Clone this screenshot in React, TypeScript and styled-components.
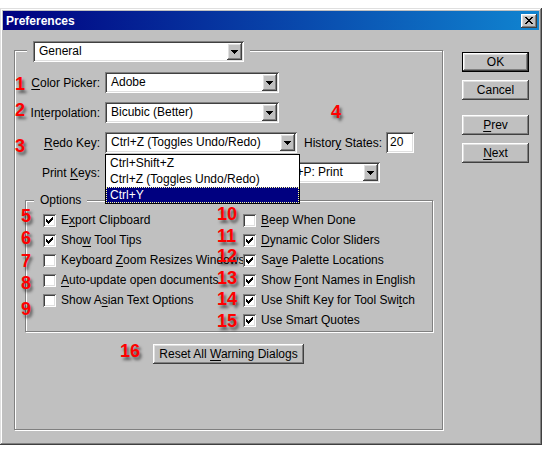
import * as React from 'react'
import styled, { createGlobalStyle, css } from 'styled-components'

const GlobalStyle = createGlobalStyle`
  html, body {
    margin: 0;
    padding: 0;
    background: #fff;
  }
  body {
    font-family: 'Liberation Sans', Arial, sans-serif;
    font-size: 12px;
    color: #000;
  }
  u {
    text-decoration-thickness: 1px;
    text-underline-offset: 2px;
  }
`

const raised = css`
  box-shadow: inset -1px -1px #404040, inset 1px 1px #fff,
    inset -2px -2px #808080, inset 2px 2px #dfdfdf;
`

const sunken = css`
  box-shadow: inset 1px 1px #808080, inset -1px -1px #fff,
    inset 2px 2px #404040, inset -2px -2px #dfdfdf;
`

const etched = css`
  border: 1px solid #808080;
  box-shadow: inset 1px 1px #fff, 1px 1px #fff;
`

// annotation numbers over the screenshot, page coordinates (x, cap top)
const MARKS: Array<[string, number, number]> = [
  ['1', 16, 78], ['2', 16, 104], ['3', 16, 140], ['4', 332, 106],
  ['5', 22, 210], ['6', 22, 232], ['7', 22, 255], ['8', 22, 277], ['9', 22, 303],
  ['10', 218, 208], ['11', 218, 230], ['12', 218, 250], ['13', 218, 272],
  ['14', 218, 293], ['15', 218, 315], ['16', 121, 345],
]

const LEFT_OPTIONS: Array<[React.ReactNode, boolean]> = [
  [<>E<u>x</u>port Clipboard</>, true],
  [<>Sho<u>w</u> Tool Tips</>, true],
  [<>Keyboard <u>Z</u>oom Resizes Windows</>, false],
  [<><u>A</u>uto-update open documents</>, false],
  [<>Show A<u>s</u>ian Text Options</>, false],
]

const RIGHT_OPTIONS: Array<[React.ReactNode, boolean]> = [
  [<><u>B</u>eep When Done</>, false],
  [<><u>D</u>ynamic Color Sliders</>, true],
  [<>Sa<u>v</u>e Palette Locations</>, true],
  [<>Show <u>F</u>ont Names in English</>, true],
  [<>Use Shift Key for Tool Swi<u>t</u>ch</>, true],
  [<>Use Smart Quotes</>, true],
]

const Arrow = () => (
  <svg width='7' height='4' viewBox='0 0 7 4' shapeRendering='crispEdges'>
    <path d='M0 0h7v1h-7zM1 1h5v1h-5zM2 2h3v1h-3zM3 3h1v1h-1z' fill='#000' />
  </svg>
)

const CheckMark = () => (
  <svg width='7' height='7' viewBox='0 0 7 7' shapeRendering='crispEdges'>
    <path
      d='M0 2h1v3h-1zM1 3h1v3h-1zM2 4h1v3h-1zM3 3h1v3h-1zM4 2h1v3h-1zM5 1h1v3h-1zM6 0h1v3h-1z'
      fill='#000'
    />
  </svg>
)

const CloseGlyph = () => (
  <svg width='8' height='7' viewBox='0 0 8 7' shapeRendering='crispEdges'>
    <path
      d='M0 0h2v1h-2zM6 0h2v1h-2zM1 1h2v1h-2zM5 1h2v1h-2zM2 2h4v1h-4zM3 3h2v1h-2zM2 4h4v1h-4zM1 5h2v1h-2zM5 5h2v1h-2zM0 6h2v1h-2zM6 6h2v1h-2z'
      fill='#000'
    />
  </svg>
)

const Combo = ({ width, value, children }: {
  width: number, value: string, children?: React.ReactNode
}) => (
  <ComboBox $width={width}>
    <ComboText>{ value }</ComboText>
    <DropButton><Arrow /></DropButton>
    { children }
  </ComboBox>
)

const Check = ({ checked, label }: { checked: boolean, label: React.ReactNode }) => (
  <CheckRow>
    <CheckBox>{ checked && <CheckMark /> }</CheckBox>
    <span>{ label }</span>
  </CheckRow>
)

export default function App() {
  return (
    <Page>
      <GlobalStyle />
      <Window>
        <TitleBar>
          <Title>Preferences</Title>
          <CloseButton><CloseGlyph /></CloseButton>
        </TitleBar>
        <Body>
          <Panel>
            <PanelHeader>
              <Combo width={211} value='General' />
            </PanelHeader>
            <Fields>
              <FieldRow>
                <FieldLabel><u>C</u>olor Picker:</FieldLabel>
                <Combo width={174} value='Adobe' />
              </FieldRow>
              <FieldRow>
                <FieldLabel>In<u>t</u>erpolation:</FieldLabel>
                <Combo width={174} value='Bicubic (Better)' />
              </FieldRow>
              <FieldRow>
                <FieldLabel><u>R</u>edo Key:</FieldLabel>
                <Combo width={192} value='Ctrl+Z (Toggles Undo/Redo)'>
                  <DropList>
                    <ListItem>Ctrl+Shift+Z</ListItem>
                    <ListItem>Ctrl+Z (Toggles Undo/Redo)</ListItem>
                    <ListItem $selected>Ctrl+Y</ListItem>
                  </DropList>
                </Combo>
                <SideLabel>Histor<u>y</u> States:</SideLabel>
                <TextInput>20</TextInput>
              </FieldRow>
              <FieldRow>
                <FieldLabel>Print <u>K</u>eys:</FieldLabel>
                <Combo width={275} value='Ctrl+P: Print with Preview / Ctrl+Alt+P: Print' />
              </FieldRow>
            </Fields>
            <OptionsGroup>
              <GroupLegend>Options</GroupLegend>
              <OptionColumns>
                <OptionColumn>
                  {LEFT_OPTIONS.map(([label, checked], i) => (
                    <Check key={i} checked={checked} label={label} />
                  ))}
                </OptionColumn>
                <OptionColumn>
                  {RIGHT_OPTIONS.map(([label, checked], i) => (
                    <Check key={i} checked={checked} label={label} />
                  ))}
                </OptionColumn>
              </OptionColumns>
            </OptionsGroup>
            <ResetButton><span>Reset All <u>W</u>arning Dialogs</span></ResetButton>
          </Panel>
          <ButtonColumn>
            <DialogButton $default>OK</DialogButton>
            <DialogButton>Cancel</DialogButton>
            <DialogButton $spaced><span><u>P</u>rev</span></DialogButton>
            <DialogButton><span><u>N</u>ext</span></DialogButton>
          </ButtonColumn>
        </Body>
      </Window>
      {MARKS.map(([n, x, y]) => (
        <Mark key={n} style={{ left: x - 1, top: y - 3 }}>{ n }</Mark>
      ))}
    </Page>
  )
}

const Page = styled.div`
  position: relative;
  box-sizing: border-box;
  width: 543px;
  height: 452px;
  padding-top: 8px;
  overflow: hidden;
`

const Window = styled.div`
  box-sizing: border-box;
  width: 542px;
  height: 437px;
  padding: 3px;
  background: #c0c0c0;
  display: flex;
  flex-direction: column;
  box-shadow: inset -1px -1px #404040, inset 1px 1px #dfdfdf,
    inset -2px -2px #808080, inset 2px 2px #fff;
`

const TitleBar = styled.div`
  height: 19px;
  display: flex;
  align-items: center;
  justify-content: space-between;
  padding: 0 2px 0 3px;
  background: linear-gradient(to right, #000080, #1084d0);
`

const Title = styled.div`
  color: #fff;
  font-weight: bold;
  font-size: 12px;
`

const CloseButton = styled.div`
  width: 16px;
  height: 14px;
  box-sizing: border-box;
  background: #c0c0c0;
  display: flex;
  align-items: center;
  justify-content: center;
  ${raised}
`

const Body = styled.div`
  flex: 1;
  display: flex;
  align-items: flex-start;
  padding-left: 11px;
`

const Panel = styled.div`
  box-sizing: border-box;
  width: 429px;
  height: 380px;
  margin-top: 20px;
  display: flex;
  flex-direction: column;
  align-items: flex-start;
  ${etched}
`

const PanelHeader = styled.div`
  margin: -10px 0 0 12px;
  padding: 0 6px;
  background: #c0c0c0;
`

const ComboBox = styled.div<{ $width: number }>`
  position: relative;
  box-sizing: border-box;
  width: ${p => p.$width}px;
  height: 21px;
  padding: 2px;
  display: flex;
  background: #fff;
  ${sunken}
`

const ComboText = styled.div`
  flex: 1;
  min-width: 0;
  padding-left: 4px;
  line-height: 17px;
  white-space: nowrap;
  overflow: hidden;
`

const DropButton = styled.div`
  width: 15px;
  flex-shrink: 0;
  box-sizing: border-box;
  background: #c0c0c0;
  display: flex;
  align-items: center;
  justify-content: center;
  padding-top: 1px;
  ${raised}
`

const DropList = styled.div`
  position: absolute;
  z-index: 2;
  top: calc(100% + 1px);
  left: 0;
  width: 195px;
  box-sizing: border-box;
  border: 1px solid #000;
  background: #fff;
`

const ListItem = styled.div<{ $selected?: boolean }>`
  height: 16px;
  line-height: 16px;
  padding-left: 4px;
  white-space: nowrap;
  ${p => p.$selected && css`
    background: #000080;
    color: #fff;
    outline: 1px dotted #ffffa0;
    outline-offset: -1px;
  `}
`

const Fields = styled.div`
  margin-top: 10px;
  display: flex;
  flex-direction: column;
  gap: 9px;
`

const FieldRow = styled.div`
  display: flex;
  align-items: center;
  height: 21px;
`

const FieldLabel = styled.div`
  width: 85px;
  margin-right: 5px;
  text-align: right;
  white-space: nowrap;
`

const SideLabel = styled.div`
  margin: 0 4px 0 7px;
  white-space: nowrap;
`

const TextInput = styled.div`
  box-sizing: border-box;
  width: 28px;
  height: 21px;
  padding: 2px 0 0 4px;
  line-height: 17px;
  background: #fff;
  ${sunken}
`

const OptionsGroup = styled.div`
  box-sizing: border-box;
  width: 408px;
  height: 132px;
  margin: 17px 0 0 10px;
  display: flex;
  flex-direction: column;
  align-items: flex-start;
  ${etched}
`

const GroupLegend = styled.div`
  margin: -8px 0 0 8px;
  padding: 0 6px;
  height: 14px;
  line-height: 14px;
  background: #c0c0c0;
`

const OptionColumns = styled.div`
  align-self: stretch;
  display: grid;
  grid-template-columns: 200px 1fr;
  padding-left: 17px;
  margin-top: 3px;
`

const OptionColumn = styled.div`
  display: flex;
  flex-direction: column;
`

const CheckRow = styled.div`
  height: 20px;
  display: flex;
  align-items: center;
  gap: 5px;
  white-space: nowrap;
`

const CheckBox = styled.div`
  width: 13px;
  height: 13px;
  flex-shrink: 0;
  box-sizing: border-box;
  background: #fff;
  display: flex;
  align-items: center;
  justify-content: center;
  ${sunken}
`

const buttonBase = css`
  box-sizing: border-box;
  height: 20px;
  background: #c0c0c0;
  display: flex;
  align-items: center;
  justify-content: center;
  white-space: nowrap;
`

const ResetButton = styled.div`
  ${buttonBase}
  width: 151px;
  margin: 12px 0 0 138px;
  ${raised}
`

const ButtonColumn = styled.div`
  margin: 22px 0 0 19px;
  display: flex;
  flex-direction: column;
  gap: 8px;
`

const DialogButton = styled.div<{ $default?: boolean, $spaced?: boolean }>`
  ${buttonBase}
  width: 67px;
  margin-top: ${p => p.$spaced ? 7 : 0}px;
  ${p => p.$default
    ? css`
      border: 1px solid #000;
      ${raised}
    `
    : raised}
`

const Mark = styled.div`
  position: absolute;
  font-family: 'Liberation Sans', Arial, sans-serif;
  font-weight: bold;
  font-size: 18px;
  line-height: 18px;
  color: #f00;
  text-shadow: 2px 3px 3px rgba(0, 0, 0, 0.55);
  pointer-events: none;
`
